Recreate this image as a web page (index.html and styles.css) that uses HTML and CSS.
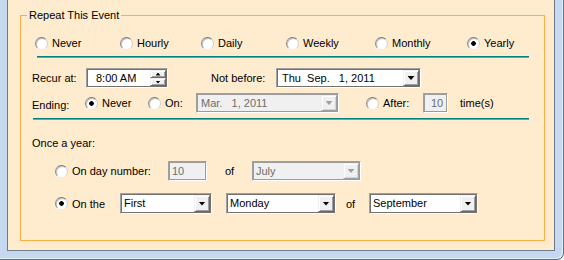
FILE: index.html
```html
<!DOCTYPE html>
<html lang="en">
<head>
  <meta charset="UTF-8" />
  <title>Repeat This Event</title>
  <link rel="stylesheet" href="styles.css">
</head>
<body>

  <div class="frame">
    <div class="client">
      <div class="group">
        <span class="group-title">Repeat This Event</span>

        <div class="freq-row">
          <label class="opt"><span class="radio"></span>Never</label>
          <label class="opt"><span class="radio"></span>Hourly</label>
          <label class="opt"><span class="radio"></span>Daily</label>
          <label class="opt"><span class="radio"></span>Weekly</label>
          <label class="opt"><span class="radio"></span>Monthly</label>
          <label class="opt"><span class="radio checked"></span>Yearly</label>
        </div>

        <div class="rule rule-top"></div>

        <div class="row row-recur">
          <span class="lbl lbl-recur">Recur at:</span>
          <div class="field time-box">
            <span class="field-text pad-time">8:00 AM</span>
            <span class="spin">
              <span class="btn spin-btn"><span class="arrow-up"></span></span>
              <span class="btn spin-btn"><span class="arrow-down"></span></span>
            </span>
          </div>
          <span class="lbl lbl-before">Not before:</span>
          <div class="field date-box">
            <span class="field-text pad-4">Thu  Sep.   1, 2011</span>
            <span class="btn drop"></span>
          </div>
        </div>

        <div class="row row-ending">
          <span class="lbl lbl-ending">Ending:</span>
          <label class="opt opt-never"><span class="radio checked"></span>Never</label>
          <label class="opt opt-on"><span class="radio"></span>On:</label>
          <div class="field disabled date-off">
            <span class="field-text pad-3">Mar.   1, 2011</span>
            <span class="btn drop"></span>
          </div>
          <label class="opt opt-after"><span class="radio"></span>After:</label>
          <div class="field disabled count-box">
            <span class="field-text pad-6">10</span>
          </div>
          <span class="lbl times">time(s)</span>
        </div>

        <div class="rule rule-mid"></div>

        <div class="year-title">Once a year:</div>

        <div class="row row-day">
          <label class="opt opt-daynum"><span class="radio"></span>On day number:</label>
          <div class="field disabled day-box">
            <span class="field-text pad-2">10</span>
          </div>
          <span class="lbl of-a">of</span>
          <div class="field disabled combo-july">
            <span class="field-text pad-2">July</span>
            <span class="btn drop"></span>
          </div>
        </div>

        <div class="row row-the">
          <label class="opt opt-onthe"><span class="radio checked"></span>On the</label>
          <div class="field combo-first">
            <span class="field-text pad-2">First</span>
            <span class="btn drop"></span>
          </div>
          <div class="field combo-monday">
            <span class="field-text pad-2">Monday</span>
            <span class="btn drop"></span>
          </div>
          <span class="lbl of-b">of</span>
          <div class="field combo-sep">
            <span class="field-text pad-2">September</span>
            <span class="btn drop"></span>
          </div>
        </div>
      </div>
    </div>
  </div>

</body>
</html>
```

FILE: styles.css
```css
body {
  margin: 0;
  font-family: "Liberation Sans", Arial, sans-serif;
  font-size: 11px;
  color: #000;
}

/* window frame */
.frame {
  width: 564px;
  height: 260px;
  box-sizing: border-box;
  background: #c4d8ef;
  padding: 0 8px 8px 7px;
  border-right: 1px solid #5f7087;
  border-bottom: 1px solid #5f7087;
  border-bottom-right-radius: 7px;
  box-shadow: inset -1px -1px 0 #e4eefa;
}
.client {
  height: 100%;
  box-sizing: border-box;
  background: #ffebcd;
  border: 1px solid #6e7b8b;
  border-top: 0;
  padding: 15px 0 0 12px;
}

/* group box */
.group {
  position: relative;
  width: 525px;
  height: 226px;
  box-sizing: border-box;
  border: 1px solid #f7b043;
  padding: 19px 0 0 11px;
}
.group-title {
  position: absolute;
  top: -7px;
  left: 6px;
  padding: 0 2px;
  line-height: 13px;
  background: #ffebcd;
}

/* radio options */
.freq-row {
  display: grid;
  grid-template-columns: 85px 81px 85px 89px 92px auto;
  align-items: center;
  height: 16px;
  margin-left: 3px;
}
.opt {
  display: flex;
  align-items: center;
  white-space: nowrap;
  flex: none;
}
.radio {
  width: 13px;
  height: 13px;
  box-sizing: border-box;
  border-radius: 50%;
  margin-right: 4px;
  flex: none;
  background: #fff;
  border: 1px solid;
  border-color: #7b7b7b #cfcfcf #ececec #8a8a8a;
  box-shadow: inset 1px 1px 0 #c4c4c4;
}
.radio.checked {
  background: radial-gradient(circle, #000 0 2px, #fff 2.6px);
}

/* separators */
.rule {
  height: 1px;
  background: #008080;
  border-bottom: 1px solid #62aaa4;
}
.rule-top {
  margin: 5px 0 0 5px;
  width: 492px;
}
.rule-mid {
  margin: 5px 0 0 1px;
  width: 496px;
}

/* rows */
.row {
  display: flex;
  align-items: center;
  height: 20px;
}
.row-recur { margin-top: 10px; }
.row-ending { margin-top: 5px; }
.row-day { margin-top: 11px; padding-left: 23px; }
.row-the { margin-top: 12px; padding-left: 23px; height: 21px; }

.lbl { white-space: nowrap; flex: none; }
.lbl-recur { width: 54px; }
.lbl-before { width: 65px; margin-left: 43px; }
.lbl-ending { width: 53px; padding-top: 4px; }
.times { margin-left: 12px; }
.of-a { width: 27px; margin-left: 18px; }
.of-b { width: 23px; margin-left: 10px; }

.opt-never { width: 63px; }
.opt-on { width: 48px; }
.opt-after { width: 57px; margin-left: 27px; }
.opt-daynum { width: 113px; }
.opt-onthe { width: 65px; }

.year-title {
  margin-top: 16px;
  height: 14px;
  line-height: 14px;
}

/* input fields */
.field {
  display: flex;
  flex: none;
  height: 100%;
  box-sizing: border-box;
  padding: 1px;
  background: #fff;
  border: 1px solid;
  border-color: #a0a0a0 #fff #fff #a0a0a0;
  box-shadow: inset 0 0 0 1px #727272;
}
.field.disabled {
  background: #f0f0f0;
  color: #6d6d6d;
  box-shadow: inset 0 0 0 1px #9b9b9b;
}
.field-text {
  flex: 1;
  line-height: 16px;
  white-space: pre;
  overflow: hidden;
}
.pad-time { padding-left: 8px; }
.pad-6 { padding-left: 6px; }
.pad-4 { padding-left: 4px; }
.pad-3 { padding-left: 3px; }
.pad-2 { padding-left: 2px; }

.time-box { width: 82px; }
.date-box { width: 145px; }
.date-off { width: 143px; }
.count-box { width: 25px; }
.day-box { width: 39px; }
.combo-july { width: 109px; }
.combo-first { width: 92px; }
.combo-monday { width: 110px; margin-left: 14px; }
.combo-sep { width: 109px; }

/* buttons inside fields */
.btn {
  display: flex;
  align-items: center;
  justify-content: center;
  box-sizing: border-box;
  background: #f0f0f0;
  border: 1px solid;
  border-color: #f0f0f0 #696969 #696969 #f0f0f0;
  box-shadow: inset 1px 1px 0 #fff, inset -1px -1px 0 #a0a0a0;
}
.drop {
  width: 16px;
  flex: none;
}
.drop::after {
  content: "";
  width: 7px;
  height: 4px;
  background: #000;
  clip-path: polygon(0 0, 100% 0, 50% 100%);
}
.disabled .drop::after {
  background: #a0a0a0;
}
.disabled .drop {
  border-color: #f0f0f0 #a0a0a0 #a0a0a0 #f0f0f0;
  box-shadow: inset 1px 1px 0 #fff, inset -1px -1px 0 #d4d4d4;
}

.spin {
  width: 16px;
  flex: none;
  display: flex;
  flex-direction: column;
}
.spin-btn {
  flex: 1;
}
.arrow-up,
.arrow-down {
  width: 5px;
  height: 3px;
  background: #000;
}
.arrow-up { clip-path: polygon(50% 0, 100% 100%, 0 100%); }
.arrow-down { clip-path: polygon(0 0, 100% 0, 50% 100%); }
```
